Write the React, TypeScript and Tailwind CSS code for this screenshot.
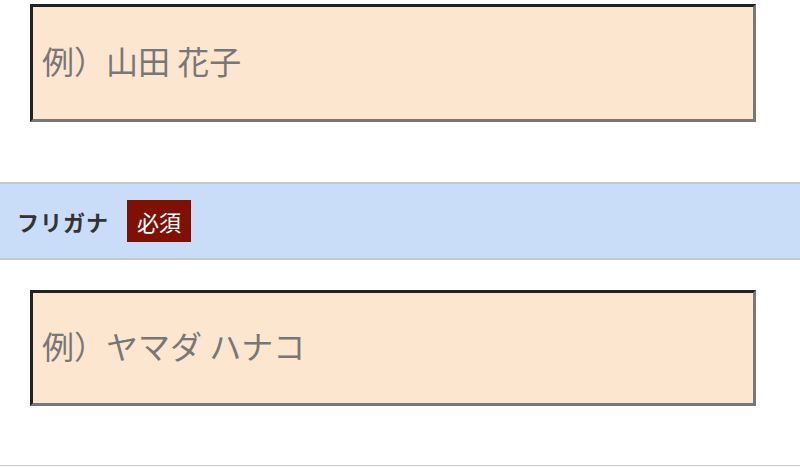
const jp = "font-['Meiryo','Noto_Sans_CJK_JP',sans-serif]";

function Field({ placeholder, h }: { placeholder: string; h: string }) {
  return (
    <input
      type="text"
      placeholder={placeholder}
      className={`${jp} ${h} block w-[726px] border-[3px] border-solid border-t-[#222] border-l-[#222] border-r-[#777] border-b-[#777] bg-[#fde6cf] px-[9px] pb-[6px] text-[32px] text-[#666] outline-none placeholder:text-[#777]`}
    />
  );
}

export default function App() {
  return (
    <div className={`${jp} min-h-[467px] bg-white`}>
      <div className="px-[30px] pt-[4px]">
        <Field placeholder="例）山田 花子" h="h-[118px]" />
      </div>

      <div className="mt-[60px] flex h-[78px] items-center gap-[18px] border-y-2 border-[#c8c8c8] bg-[#c9dcf8] pl-[17px]">
        <span className="text-[22px] tracking-[1px] font-bold text-[#333]">フリガナ</span>
        <span className="flex h-[42px] w-[64px] items-center justify-center bg-[#7f1006] text-[22px] text-white">
          必須
        </span>
      </div>

      <div className="px-[30px] pt-[30px]">
        <Field placeholder="例）ヤマダ ハナコ" h="h-[116px]" />
      </div>

      <div className="mt-[59px] border-t border-[#c8c8c8]" />
    </div>
  );
}
